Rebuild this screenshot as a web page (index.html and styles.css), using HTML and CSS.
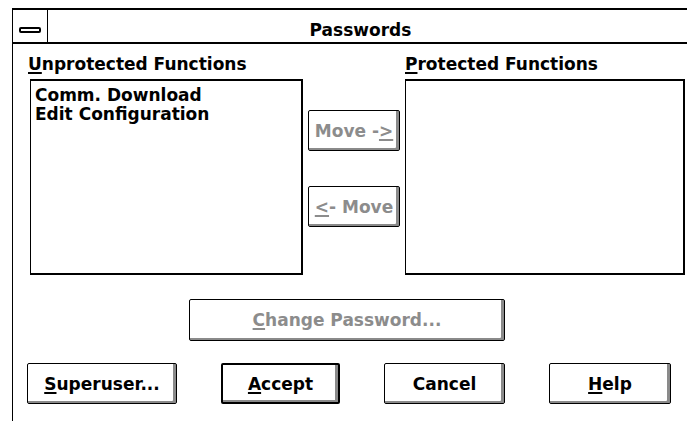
FILE: index.html
```html
<!DOCTYPE html>
<html lang="en">

<head>
    <meta charset="UTF-8">
    <meta name="viewport" content="width=device-width, initial-scale=1.0">
    <title>Passwords</title>
    <link rel="stylesheet" href="styles.css">
</head>

<body>
    <div class="dialog">
        <div class="titlebar">
            <div class="sysmenu"><span class="sysbar"></span></div>
            <div class="title">Passwords</div>
        </div>
        <div class="dialog-body">
            <div class="lists">
                <div class="list-col left-col">
                    <div class="label"><u>U</u>nprotected Functions</div>
                    <div class="listbox">
                        <div class="item">Comm. Download</div>
                        <div class="item">Edit Configuration</div>
                    </div>
                </div>
                <div class="move-col">
                    <button class="btn disabled move-btn">Move -<u>&gt;</u></button>
                    <button class="btn disabled move-btn"><u>&lt;</u>- Move</button>
                </div>
                <div class="list-col right-col">
                    <div class="label"><u>P</u>rotected Functions</div>
                    <div class="listbox"></div>
                </div>
            </div>
            <div class="change-row">
                <button class="btn disabled change-btn"><u>C</u>hange Password...</button>
            </div>
            <div class="actions">
                <button class="btn superuser-btn"><u>S</u>uperuser...</button>
                <button class="btn default accept-btn"><u>A</u>ccept</button>
                <button class="btn cancel-btn">Cancel</button>
                <button class="btn help-btn"><u>H</u>elp</button>
            </div>
        </div>
    </div>
</body>

</html>
```

FILE: styles.css
```css
body {
    font-family: 'DejaVu Sans', 'Liberation Sans', sans-serif;
    font-weight: bold;
    font-size: 17px;
    margin: 0;
    padding: 0;
    background-color: #fff;
    color: #000;
    overflow: hidden;
}

u {
    text-decoration-thickness: 2px;
    text-underline-offset: 2px;
}

.dialog {
    margin: 8px 0 0 12px;
    width: 690px;
    height: 430px;
    border-top: 2px solid #000;
    border-left: 1px solid #000;
}

/* title bar */
.titlebar {
    display: flex;
    height: 32px;
    border-bottom: 2px solid #000;
}

.sysmenu {
    width: 35px;
    border-right: 1px solid #000;
    display: flex;
    align-items: flex-end;
    justify-content: center;
    padding-bottom: 9px;
    box-sizing: border-box;
}

.sysbar {
    display: block;
    width: 18px;
    height: 2px;
    background-color: #fff;
    border: 2px solid #000;
    border-radius: 2px;
}

.title {
    flex-grow: 1;
    text-align: center;
    line-height: 20px;
    padding-top: 10px;
    padding-right: 30px;
}

/* body */
.dialog-body {
    padding-top: 10px;
}

.lists {
    display: flex;
    margin-left: 17px;
}

.list-col {
    display: flex;
    flex-direction: column;
}

.left-col {
    width: 273px;
}

.left-col .label {
    margin-left: -2px;
}

.right-col {
    width: 280px;
}

.label {
    line-height: 20px;
    height: 20px;
}

.listbox {
    margin-top: 5px;
    height: 196px;
    box-sizing: border-box;
    border: 2px solid #000;
    border-left-width: 1px;
    padding: 5px 4px;
}

.item {
    line-height: 19px;
}

.move-col {
    width: 102px;
    padding: 56px 0 0 5px;
    box-sizing: border-box;
    display: flex;
    flex-direction: column;
    gap: 35px;
}

/* buttons */
.btn {
    font-family: inherit;
    font-weight: bold;
    font-size: 17px;
    color: #000;
    background-color: #fff;
    border: 1px solid #000;
    border-radius: 2px;
    box-shadow: inset -3px -2px 0 #8a8a8a;
    height: 41px;
    padding: 0;
    line-height: 20px;
    cursor: pointer;
}

.btn.default {
    border-width: 2px;
}

.btn.disabled {
    color: #8c8c8c;
    cursor: default;
}

.move-btn {
    width: 92px;
}

.change-row {
    margin: 24px 0 0 176px;
}

.change-btn {
    width: 316px;
    height: 42px;
}

.actions {
    display: flex;
    gap: 44px;
    margin: 22px 0 0 14px;
}

.superuser-btn {
    width: 150px;
}

.accept-btn {
    width: 119px;
}

.cancel-btn {
    width: 121px;
}

.help-btn {
    width: 122px;
}
```
